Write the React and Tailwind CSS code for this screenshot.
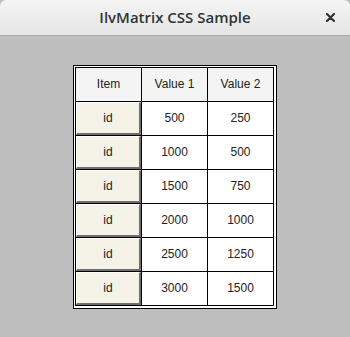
import React from 'react';

const rows = [
  ['500', '250'],
  ['1000', '500'],
  ['1500', '750'],
  ['2000', '1000'],
  ['2500', '1250'],
  ['3000', '1500'],
];

const cell = 'flex h-[34px] w-[66px] items-center justify-center border-r border-b border-black';

const App = () => {
  return (
    <div className="flex h-[337px] w-[350px] flex-col overflow-hidden bg-[#bebebe]">
      <div className="relative flex h-[36px] shrink-0 items-center justify-center rounded-t-[6px] border-b border-[#a8a8a8] bg-gradient-to-b from-[#f4f4f4] to-[#e6e6e6]">
        <span className="font-['Open_Sans',sans-serif] text-[15px] font-semibold text-[#2e3436]">IlvMatrix CSS Sample</span>
        <svg className="absolute right-[15px] top-[13px]" width="9" height="9" viewBox="0 0 9 9">
          <path d="M1 1L8 8M8 1L1 8" stroke="#2e3436" strokeWidth="2.2" strokeLinecap="round" />
        </svg>
      </div>

      <div className="flex flex-1 items-center justify-center">
        <div className="border border-black bg-white pt-px pl-px pr-[2px] pb-[2px] font-['Liberation_Sans',Arial,sans-serif] text-[12px] text-[#222]">
          <div className="grid grid-cols-[66px_66px_66px] border-t border-l border-black">
            <div className={`${cell} bg-[#f4f4f4]`}>Item</div>
            <div className={`${cell} bg-[#f4f4f4]`}>Value 1</div>
            <div className={`${cell} bg-[#f4f4f4]`}>Value 2</div>
            {rows.map(([a, b], i) => (
              <React.Fragment key={i}>
                <div className="h-[34px] w-[66px] border-r border-b border-black">
                  <div className="flex h-full w-full items-center justify-center border-t border-l border-t-white border-l-white border-r-[2px] border-b-[2px] border-r-[#6e6e6e] border-b-[#6e6e6e] bg-[#f5f3e8]">
                    id
                  </div>
                </div>
                <div className={`${cell} bg-white`}>{a}</div>
                <div className={`${cell} bg-white`}>{b}</div>
              </React.Fragment>
            ))}
          </div>
        </div>
      </div>
    </div>
  );
};

export default App;
